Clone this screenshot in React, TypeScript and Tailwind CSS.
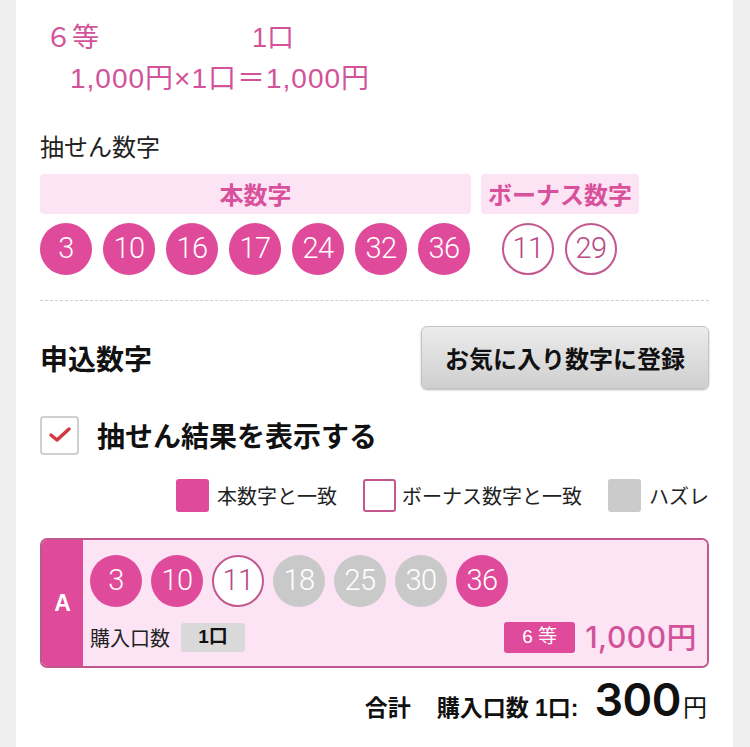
import React from "react";

const main = [3, 10, 16, 17, 24, 32, 36];
const bonus = [11, 29];

type Kind = "hit" | "bonus" | "miss";
const mine: { n: number; kind: Kind }[] = [
  { n: 3, kind: "hit" },
  { n: 10, kind: "hit" },
  { n: 11, kind: "bonus" },
  { n: 18, kind: "miss" },
  { n: 25, kind: "miss" },
  { n: 30, kind: "miss" },
  { n: 36, kind: "hit" },
];

const latin = { fontFamily: '"Liberation Sans", "Noto Sans CJK JP", sans-serif' };

function Ball({ n, kind }: { n: number; kind: Kind }) {
  const cls =
    kind === "hit"
      ? "bg-[#df4a9a] text-white"
      : kind === "bonus"
      ? "bg-white text-[#b8487f] border-2 border-[#c2588e]"
      : "bg-[#c9c9c9] text-white";
  return (
    <div
      className={`w-[52px] h-[52px] rounded-full flex items-center justify-center text-[29px] font-light tracking-[-0.5px] shrink-0 ${cls}`}
      style={{ fontFamily: 'Roboto, "Liberation Sans", sans-serif' }}
    >
      {n}
    </div>
  );
}

export default function App() {
  return (
    <div
      className="w-[750px] h-[747px] overflow-hidden bg-[#efefef] flex"
      style={{ fontFamily: '"Noto Sans CJK JP", "Noto Sans", sans-serif' }}
    >
      <div className="ml-[16px] w-[717px] bg-white px-[24px] pt-[19px]">
        {/* prize summary */}
        <div className="text-[#d2539a] leading-[38px]" style={latin}>
          <div className="flex pl-[5px] text-[27px]">
            <span className="w-[207px]">６等</span>
            <span>1口</span>
          </div>
          <div className="pl-[30px] mt-[3px] text-[28px] tracking-[1px]">1,000円×1口＝1,000円</div>
        </div>

        {/* draw numbers */}
        <div className="mt-[31px] text-[24px] leading-[34px] text-[#222]">抽せん数字</div>
        <div className="mt-[11px] flex gap-[10px]">
          <div className="w-[431px] h-[40px] rounded-[4px] bg-[#fce4f5] flex items-center justify-center text-[24px] font-bold text-[#d9519b]">
            本数字
          </div>
          <div className="w-[158px] h-[40px] rounded-[4px] bg-[#fce4f5] flex items-center justify-center text-[24px] font-bold text-[#d9519b]">
            ボーナス数字
          </div>
        </div>
        <div className="mt-[9px] flex">
          <div className="flex gap-[11px]">
            {main.map((n) => (
              <Ball key={n} n={n} kind="hit" />
            ))}
          </div>
          <div className="flex gap-[11px] ml-[32px]">
            {bonus.map((n) => (
              <Ball key={n} n={n} kind="bonus" />
            ))}
          </div>
        </div>
        <div className="mt-[25px] border-t border-dashed border-[#cfcfcf]" />

        {/* entry numbers */}
        <div className="mt-[25px] flex items-center justify-between">
          <div className="text-[28px] font-bold text-[#111]">申込数字</div>
          <button className="w-[288px] h-[63px] rounded-[6px] bg-gradient-to-b from-[#ececec] to-[#cfcfcf] border border-[#c4c4c4] shadow-[0_1px_2px_rgba(0,0,0,0.3)] text-[24px] font-bold text-[#111]">
            お気に入り数字に登録
          </button>
        </div>

        <div className="mt-[25px] flex items-center">
          <div className="w-[39px] h-[39px] rounded-[4px] border-2 border-[#cfcfcf] bg-white flex items-center justify-center">
            <svg width="24" height="18" viewBox="0 0 24 18">
              <path d="M3 9 L9 14 L21 3" fill="none" stroke="#d23a3f" strokeWidth="3.5" strokeLinecap="round" strokeLinejoin="round" />
            </svg>
          </div>
          <div className="ml-[18px] text-[28px] font-bold text-[#111]">抽せん結果を表示する</div>
        </div>

        {/* legend */}
        <div className="mt-[23px] flex items-center justify-end text-[20px] text-[#222]">
          <div className="w-[33px] h-[33px] rounded-[3px] bg-[#df4a9a]" />
          <span className="ml-[8px]">本数字と一致</span>
          <div className="ml-[26px] w-[33px] h-[33px] rounded-[3px] bg-white border-2 border-[#c2588e]" />
          <span className="ml-[6px]">ボーナス数字と一致</span>
          <div className="ml-[26px] w-[33px] h-[33px] rounded-[3px] bg-[#cbcbcb]" />
          <span className="ml-[8px]">ハズレ</span>
        </div>

        {/* ticket */}
        <div className="mt-[26px] h-[130px] flex rounded-[7px] border-2 border-[#c05890] overflow-hidden">
          <div className="w-[41px] bg-[#df4a9a] flex items-center justify-center text-white text-[23px] font-bold" style={latin}>
            A
          </div>
          <div className="flex-1 bg-[#fce4f5] pl-[7px] pr-[10px] pt-[15px]">
            <div className="flex gap-[9px]">
              {mine.map((b) => (
                <Ball key={b.n} n={b.n} kind={b.kind} />
              ))}
            </div>
            <div className="mt-[8px] flex items-center justify-between">
              <div className="flex items-center">
                <span className="text-[20px] text-[#222]">購入口数</span>
                <span className="ml-[11px] w-[64px] h-[29px] rounded-[3px] bg-[#d9d9d9] flex items-center justify-center text-[19px] font-bold text-[#111]" style={latin}>
                  1口
                </span>
              </div>
              <div className="flex items-center">
                <span className="w-[71px] h-[31px] rounded-[3px] bg-[#df4a9a] flex items-center justify-center text-[19px] text-white" style={latin}>
                  6 等
                </span>
                <span
                  className="ml-[10px] text-[30px] font-medium text-[#d2539a] tracking-[0.5px]"
                  style={{ fontFamily: 'Inter, "Noto Sans CJK JP", sans-serif' }}
                >
                  1,000円
                </span>
              </div>
            </div>
          </div>
        </div>

        {/* total */}
        <div className="mt-[4px] flex items-baseline justify-end text-[#111] pr-[2px]" style={latin}>
          <span className="text-[23px] font-bold">合計</span>
          <span className="ml-[26px] text-[23px] font-bold">購入口数 1口:</span>
          <span
            className="ml-[16px] text-[45px] font-semibold leading-[56px] tracking-[-0.5px]"
            style={{ fontFamily: 'Inter, "Liberation Sans", sans-serif' }}
          >
            300
          </span>
          <span className="ml-[2px] text-[24px]">円</span>
        </div>
      </div>
    </div>
  );
}
